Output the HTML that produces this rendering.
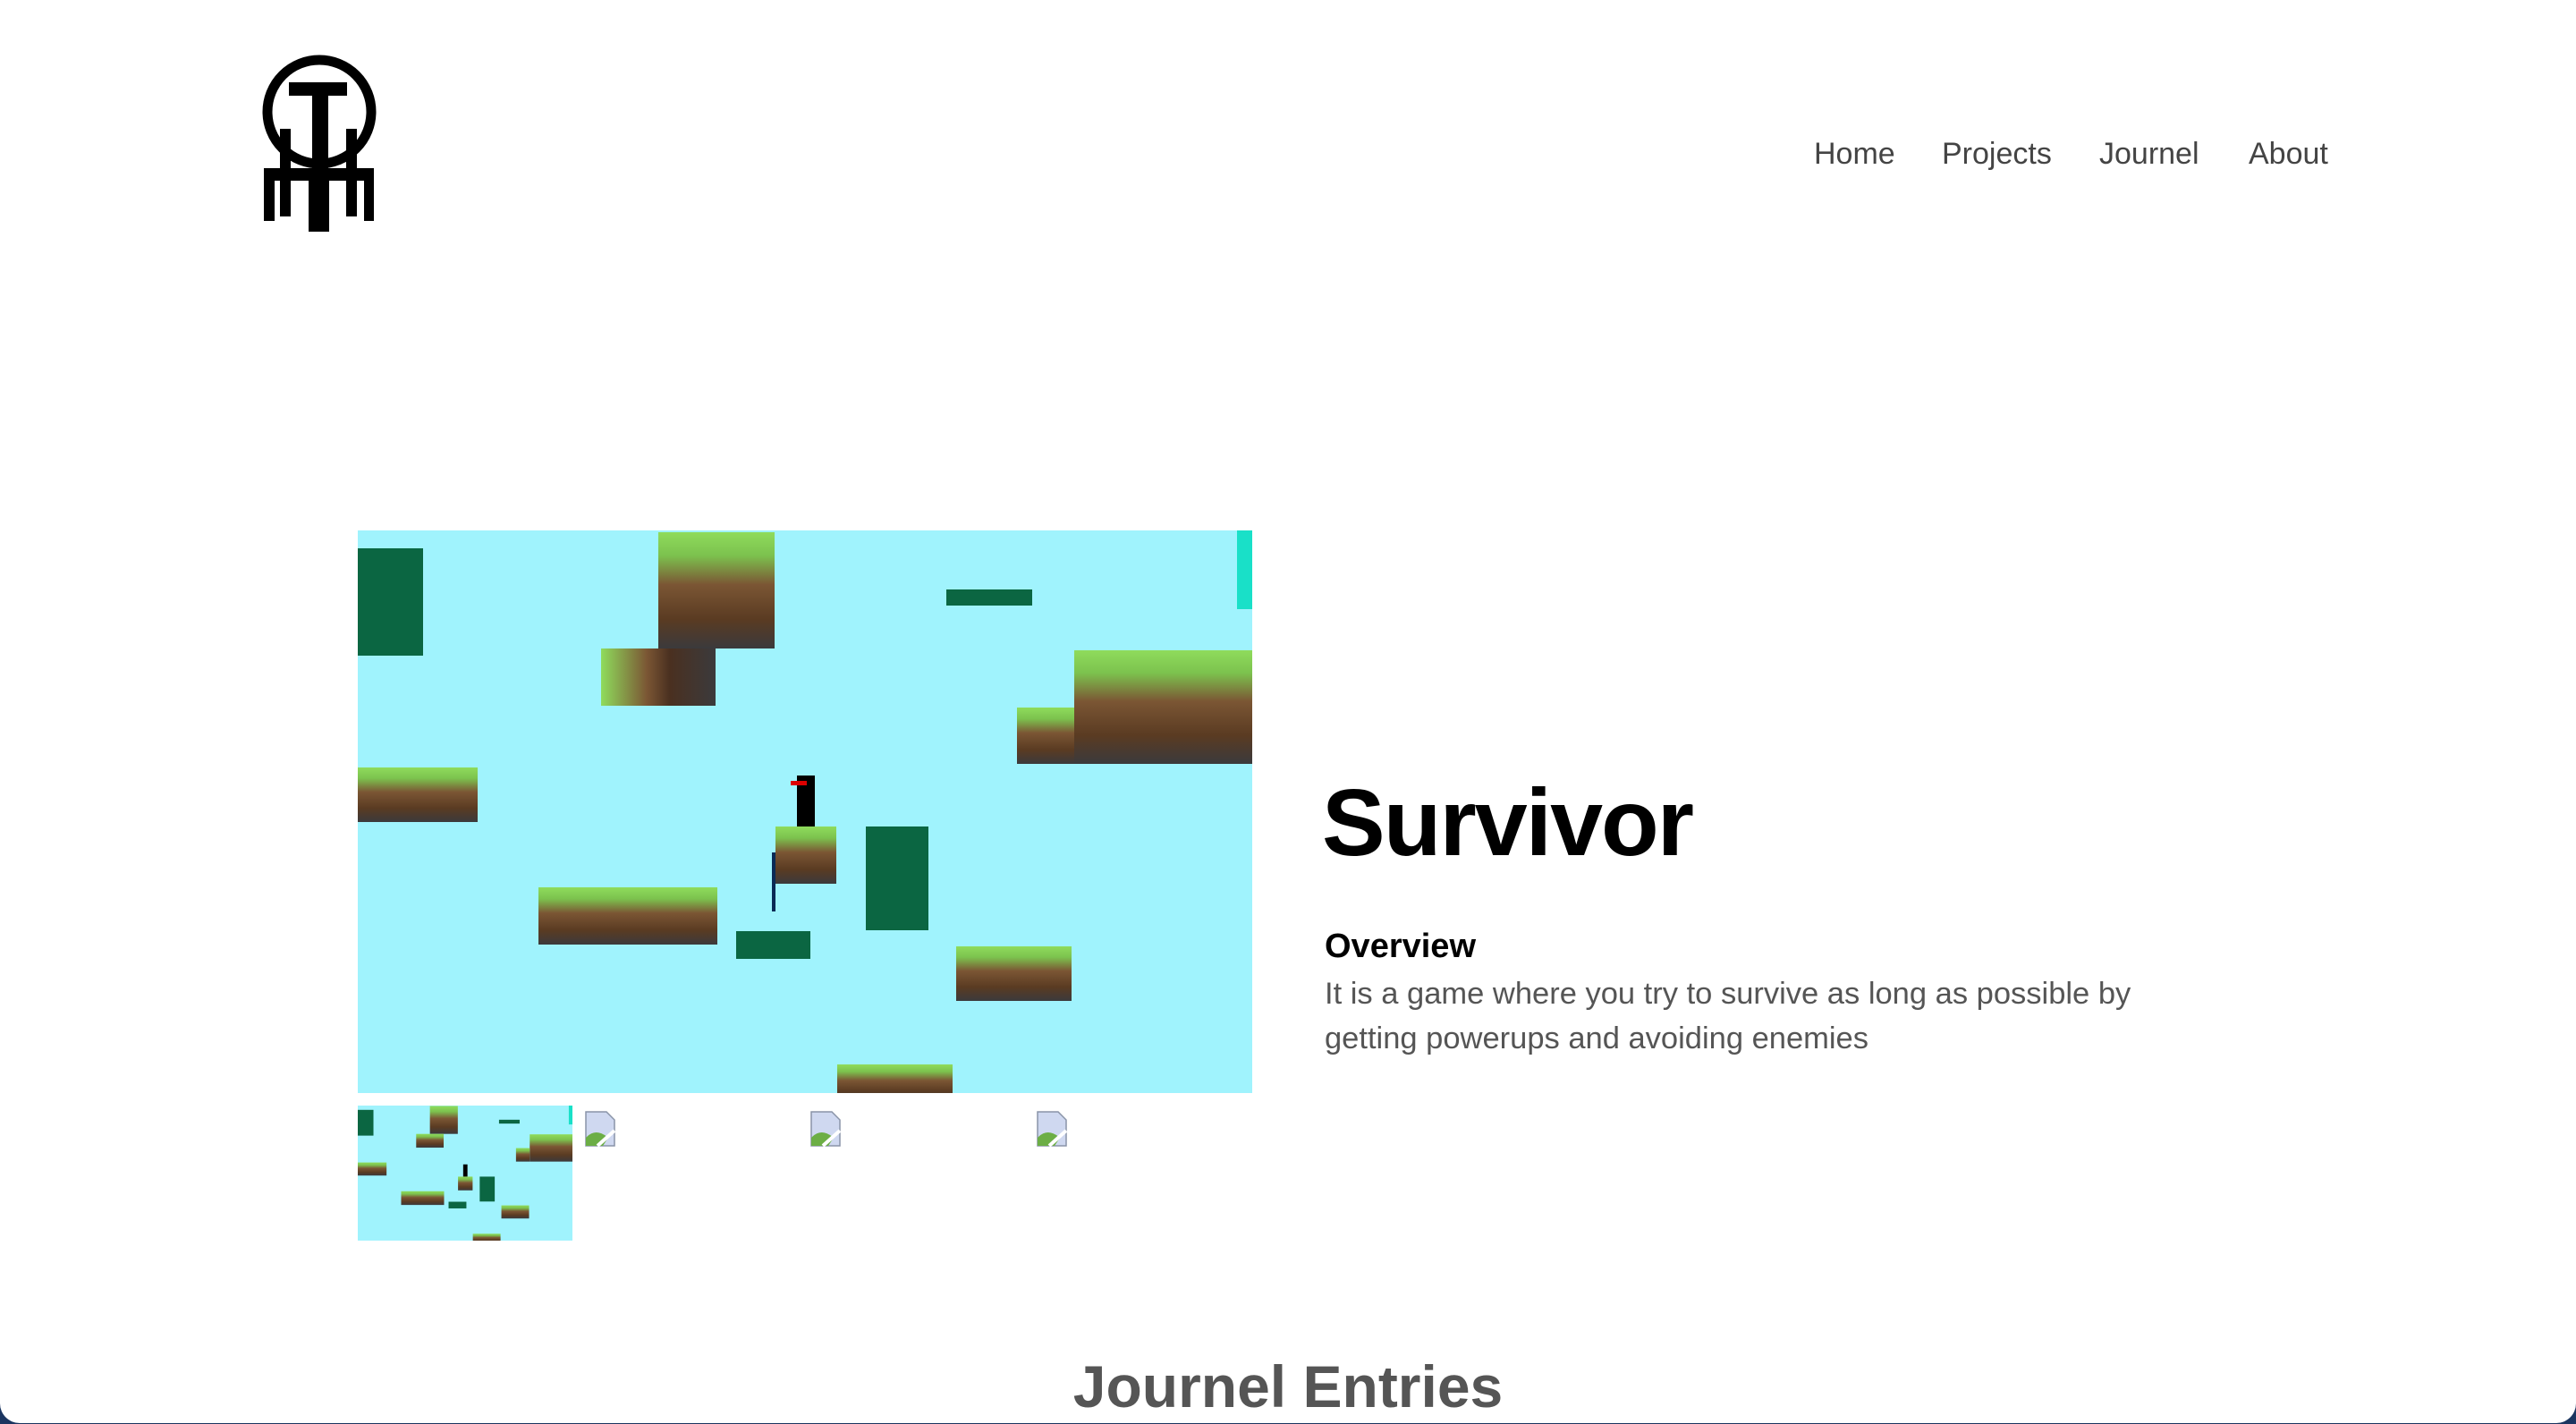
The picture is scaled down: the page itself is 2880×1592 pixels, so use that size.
<!DOCTYPE html>
<html><head><meta charset="utf-8"><style>
html,body{margin:0;padding:0;width:2880px;height:1592px;overflow:hidden;background:#1b3560;}
.page{position:absolute;left:0;top:0;width:2880px;height:1591px;background:#fff;border-radius:0 0 22px 22px;overflow:hidden;font-family:"Liberation Sans",sans-serif;}
.nav{position:absolute;top:153px;font-size:34px;color:#444;}
.scene{position:absolute;left:0;top:0;width:1000px;height:629px;background:#a0f3fd;overflow:hidden;}
.scene div{position:absolute;}
.dg{background:#0b6642;}
.pl{background:linear-gradient(#8fdc5c 0%,#7cc24e 20%,#7b5634 45%,#5a3b22 75%,#3b3a3c 100%);}
.bi{position:absolute;top:1242px;}
</style></head><body><div class="page">
<svg style="position:absolute;left:0;top:0" width="500" height="300">
<circle cx="357" cy="125" r="58" fill="none" stroke="#000" stroke-width="11"/>
<rect x="323" y="92" width="65" height="15"/>
<rect x="349" y="92" width="18" height="110"/>
<rect x="313" y="144" width="12" height="98"/>
<rect x="387" y="144" width="12" height="98"/>
<rect x="295" y="188" width="123" height="14"/>
<rect x="295" y="188" width="12" height="59"/>
<rect x="407" y="188" width="11" height="59"/>
<rect x="345" y="197" width="23" height="62"/>
</svg>
<div class="nav" style="left:2028px">Home</div>
<div class="nav" style="left:2171px">Projects</div>
<div class="nav" style="left:2347px">Journel</div>
<div class="nav" style="left:2514px">About</div>

<div style="position:absolute;left:400px;top:593px;width:1000px;height:629px;overflow:hidden">
<div class="scene" id="sc">
<div class="dg" style="left:0;top:20px;width:73px;height:120px"></div>
<div class="pl" style="left:336px;top:2px;width:130px;height:130px"></div>
<div class="pl" style="left:272px;top:132px;width:128px;height:64px;background:linear-gradient(90deg,#8fdc5c 0,#7b5634 40%,#4a3020 60%,#3b3a3c)"></div>
<div class="dg" style="left:658px;top:66px;width:96px;height:18px"></div>
<div style="left:983px;top:0;width:17px;height:88px;background:#19e0c8"></div>
<div class="pl" style="left:801px;top:134px;width:199px;height:127px"></div>
<div class="pl" style="left:737px;top:198px;width:64px;height:63px"></div>
<div class="pl" style="left:0;top:265px;width:134px;height:61px"></div>
<div style="left:491px;top:274px;width:20px;height:57px;background:#000"></div>
<div style="left:484px;top:280px;width:18px;height:5px;background:#d00"></div>
<div class="pl" style="left:467px;top:331px;width:68px;height:64px"></div>
<div style="left:463px;top:360px;width:4px;height:66px;background:#0a2a55"></div>
<div class="dg" style="left:568px;top:331px;width:70px;height:116px"></div>
<div class="pl" style="left:202px;top:399px;width:200px;height:64px"></div>
<div class="dg" style="left:423px;top:448px;width:83px;height:31px"></div>
<div class="pl" style="left:669px;top:465px;width:129px;height:61px"></div>
<div class="pl" style="left:536px;top:597px;width:129px;height:40px"></div>
</div></div>

<div style="position:absolute;left:400px;top:1236px;width:240px;height:151px;overflow:hidden">
<div style="transform:scale(0.24);transform-origin:0 0;width:1000px;height:629px;position:relative">
<div class="scene">
<div class="dg" style="left:0;top:20px;width:73px;height:120px"></div>
<div class="pl" style="left:336px;top:2px;width:130px;height:130px"></div>
<div class="pl" style="left:272px;top:132px;width:128px;height:64px"></div>
<div class="dg" style="left:658px;top:66px;width:96px;height:18px"></div>
<div style="left:983px;top:0;width:17px;height:88px;background:#19e0c8"></div>
<div class="pl" style="left:801px;top:134px;width:199px;height:127px"></div>
<div class="pl" style="left:737px;top:198px;width:64px;height:63px"></div>
<div class="pl" style="left:0;top:265px;width:134px;height:61px"></div>
<div style="left:491px;top:274px;width:20px;height:57px;background:#000"></div>
<div class="pl" style="left:467px;top:331px;width:68px;height:64px"></div>
<div class="dg" style="left:568px;top:331px;width:70px;height:116px"></div>
<div class="pl" style="left:202px;top:399px;width:200px;height:64px"></div>
<div class="dg" style="left:423px;top:448px;width:83px;height:31px"></div>
<div class="pl" style="left:669px;top:465px;width:129px;height:61px"></div>
<div class="pl" style="left:536px;top:597px;width:129px;height:40px"></div>
</div></div></div>

<svg class="bi" style="left:654px" width="34" height="40" viewBox="0 0 34 40"><path d="M1 1H24L33 10V39H1Z" fill="#cfd8f0" stroke="#8a94a8" stroke-width="1.5"/><path d="M1 39L1 30Q12 18 26 30L20 39Z" fill="#6cae45"/><path d="M14 39L33 22" stroke="#fff" stroke-width="4"/></svg>
<svg class="bi" style="left:906px" width="34" height="40" viewBox="0 0 34 40"><path d="M1 1H24L33 10V39H1Z" fill="#cfd8f0" stroke="#8a94a8" stroke-width="1.5"/><path d="M1 39L1 30Q12 18 26 30L20 39Z" fill="#6cae45"/><path d="M14 39L33 22" stroke="#fff" stroke-width="4"/></svg>
<svg class="bi" style="left:1159px" width="34" height="40" viewBox="0 0 34 40"><path d="M1 1H24L33 10V39H1Z" fill="#cfd8f0" stroke="#8a94a8" stroke-width="1.5"/><path d="M1 39L1 30Q12 18 26 30L20 39Z" fill="#6cae45"/><path d="M14 39L33 22" stroke="#fff" stroke-width="4"/></svg>

<div style="position:absolute;left:1478px;top:858px;font-size:106px;font-weight:bold;color:#000;line-height:124px;letter-spacing:-2px">Survivor</div>
<div style="position:absolute;left:1481px;top:1036px;font-size:38px;font-weight:bold;color:#000;line-height:44px">Overview</div>
<div style="position:absolute;left:1481px;top:1086px;width:1100px;font-size:34.5px;color:#555;line-height:50px">It is a game where you try to survive as long as possible by<br>getting powerups and avoiding enemies</div>
<div style="position:absolute;left:0;width:2880px;top:1510px;text-align:center;font-size:66px;font-weight:bold;color:#555;line-height:80px">Journel Entries</div>
</div></body></html>
